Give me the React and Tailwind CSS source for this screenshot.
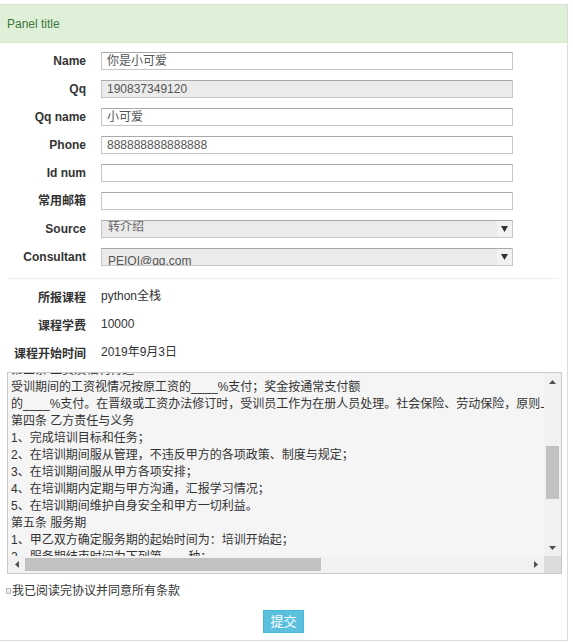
import React from "react";

const FONT = { fontFamily: '"Liberation Sans", Arial, "Noto Sans CJK SC", sans-serif' };

function Label({ children }) {
  return (
    <div className="w-[86px] text-right font-bold text-[12px] text-[#333] leading-[18px] whitespace-nowrap">
      {children}
    </div>
  );
}

function TextInput({ value, disabled }) {
  return (
    <div
      className={
        "ml-[15px] w-[412px] h-[18px] border border-[#c6c6c6] border-t-[#a9a9a9] flex items-center px-[5px] text-[12px] text-[#555] leading-[16px] overflow-hidden " +
        (disabled ? "bg-[#ebebeb]" : "bg-white")
      }
    >
      {value}
    </div>
  );
}

function Arrow() {
  return (
    <div className="w-[15px] h-[16px] bg-[#f2f2f2] flex items-center justify-center">
      <svg width="7" height="6" viewBox="0 0 7 6">
        <path d="M0 0 L7 0 L3.5 6 Z" fill="#333" />
      </svg>
    </div>
  );
}

function SelectBox({ value, shift }) {
  return (
    <div className="ml-[15px] w-[412px] h-[18px] border border-[#c6c6c6] border-t-[#a9a9a9] bg-[#ebebeb] flex items-stretch overflow-hidden">
      <div className="flex-1 overflow-hidden px-[6px] text-[12px] text-[#555] leading-[16px]">
        <div className={shift}>{value}</div>
      </div>
      <Arrow />
    </div>
  );
}

function Row({ label, children }) {
  return (
    <div className="flex items-center h-[28px]">
      <Label>{label}</Label>
      {children}
    </div>
  );
}

function StaticRow({ label, value }) {
  return (
    <div className="flex items-center h-[28px]">
      <Label>{label}</Label>
      <div className="ml-[15px] text-[12px] text-[#333] leading-[18px] -mt-[4px]">{value}</div>
    </div>
  );
}

const lines = [
  "第三条 工资及福利待遇",
  "受训期间的工资视情况按原工资的____%支付；奖金按通常支付额",
  "的____%支付。在晋级或工资办法修订时，受训员工作为在册人员处理。社会保险、劳动保险，原则上按照国家规定执行。",
  "第四条 乙方责任与义务",
  "1、完成培训目标和任务；",
  "2、在培训期间服从管理，不违反甲方的各项政策、制度与规定；",
  "3、在培训期间服从甲方各项安排；",
  "4、在培训期内定期与甲方沟通，汇报学习情况；",
  "5、在培训期间维护自身安全和甲方一切利益。",
  "第五条 服务期",
  "1、甲乙双方确定服务期的起始时间为：培训开始起；",
  "2、服务期结束时间为下列第____种：",
];

function Tri({ dir }) {
  const d = {
    up: "M0 4 L7 4 L3.5 0 Z",
    down: "M0 0 L7 0 L3.5 4 Z",
    left: "M4 0 L4 7 L0 3.5 Z",
    right: "M0 0 L0 7 L4 3.5 Z",
  }[dir];
  const w = dir === "up" || dir === "down" ? 7 : 4;
  const h = dir === "up" || dir === "down" ? 4 : 7;
  return (
    <svg width={w} height={h} viewBox={`0 0 ${w} ${h}`}>
      <path d={d} fill="#505050" />
    </svg>
  );
}

function TextArea() {
  return (
    <div className="ml-[7px] w-[555px] h-[202px] border border-[#c9c9c9] bg-[#f5f5f5] grid grid-cols-[1fr_17px] grid-rows-[1fr_17px]">
      <div className="overflow-hidden">
        <div className="-mt-[11px] px-[3px] text-[12px] leading-[17px] text-[#333] whitespace-pre">
          {lines.map((l, i) => (
            <div key={i}>{l}</div>
          ))}
        </div>
      </div>
      <div className="flex flex-col bg-[#f1f1f1]">
        <div className="h-[17px] flex items-center justify-center">
          <Tri dir="up" />
        </div>
        <div className="h-[56px]" />
        <div className="h-[53px] mx-[2px] bg-[#c1c1c1]" />
        <div className="flex-1" />
        <div className="h-[17px] flex items-center justify-center">
          <Tri dir="down" />
        </div>
      </div>
      <div className="flex bg-[#f1f1f1]">
        <div className="w-[17px] flex items-center justify-center">
          <Tri dir="left" />
        </div>
        <div className="w-[296px] my-[2px] bg-[#c1c1c1]" />
        <div className="flex-1" />
        <div className="w-[17px] flex items-center justify-center">
          <Tri dir="right" />
        </div>
      </div>
      <div className="bg-[#dcdcdc]" />
    </div>
  );
}

export default function App() {
  return (
    <div className="w-[573px] h-[643px] bg-white pt-[4px]" style={FONT}>
      <div className="w-[568px] h-[637px] border-t border-r border-b border-[#dcdcdc] flex flex-col">
        <div className="h-[38px] bg-[#dff0d8] border-b border-[#d6e9c6] px-[7px] flex items-center text-[12px] text-[#3c763d]">
          Panel title
        </div>
        <div className="pt-[4px]">
          <Row label="Name"><TextInput value="你是小可爱" /></Row>
          <Row label="Qq"><TextInput value="190837349120" disabled /></Row>
          <Row label="Qq name"><TextInput value="小可爱" /></Row>
          <Row label="Phone"><TextInput value="888888888888888" /></Row>
          <Row label="Id num"><TextInput value="" /></Row>
          <Row label="常用邮箱"><TextInput value="" /></Row>
          <Row label="Source"><SelectBox value="转介绍" shift="-mt-[2px] text-[#666]" /></Row>
          <Row label="Consultant"><SelectBox value="PEIQI@qq.com" shift="pt-[4px]" /></Row>
        </div>
        <div className="mt-[7px] mx-[8px] border-t border-[#eeeeee]" />
        <div className="pt-[5px]">
          <StaticRow label="所报课程" value="python全栈" />
          <StaticRow label="课程学费" value="10000" />
          <StaticRow label="课程开始时间" value="2019年9月3日" />
        </div>
        <div className="mt-[4px]">
          <TextArea />
        </div>
        <div className="mt-[8px] h-[18px] flex items-center pl-[6px] text-[12px] text-[#333]">
          <span className="w-[5px] h-[6px] border border-[#bbb] bg-[#eee] mr-[1px]" />
          我已阅读完协议并同意所有条款
        </div>
        <div className="mt-[10px] flex justify-center">
          <button className="h-[23px] px-[6px] bg-[#5bc0de] border border-[#46b8da] text-white text-[13px] leading-[21px]">
            提交
          </button>
        </div>
      </div>
    </div>
  );
}
